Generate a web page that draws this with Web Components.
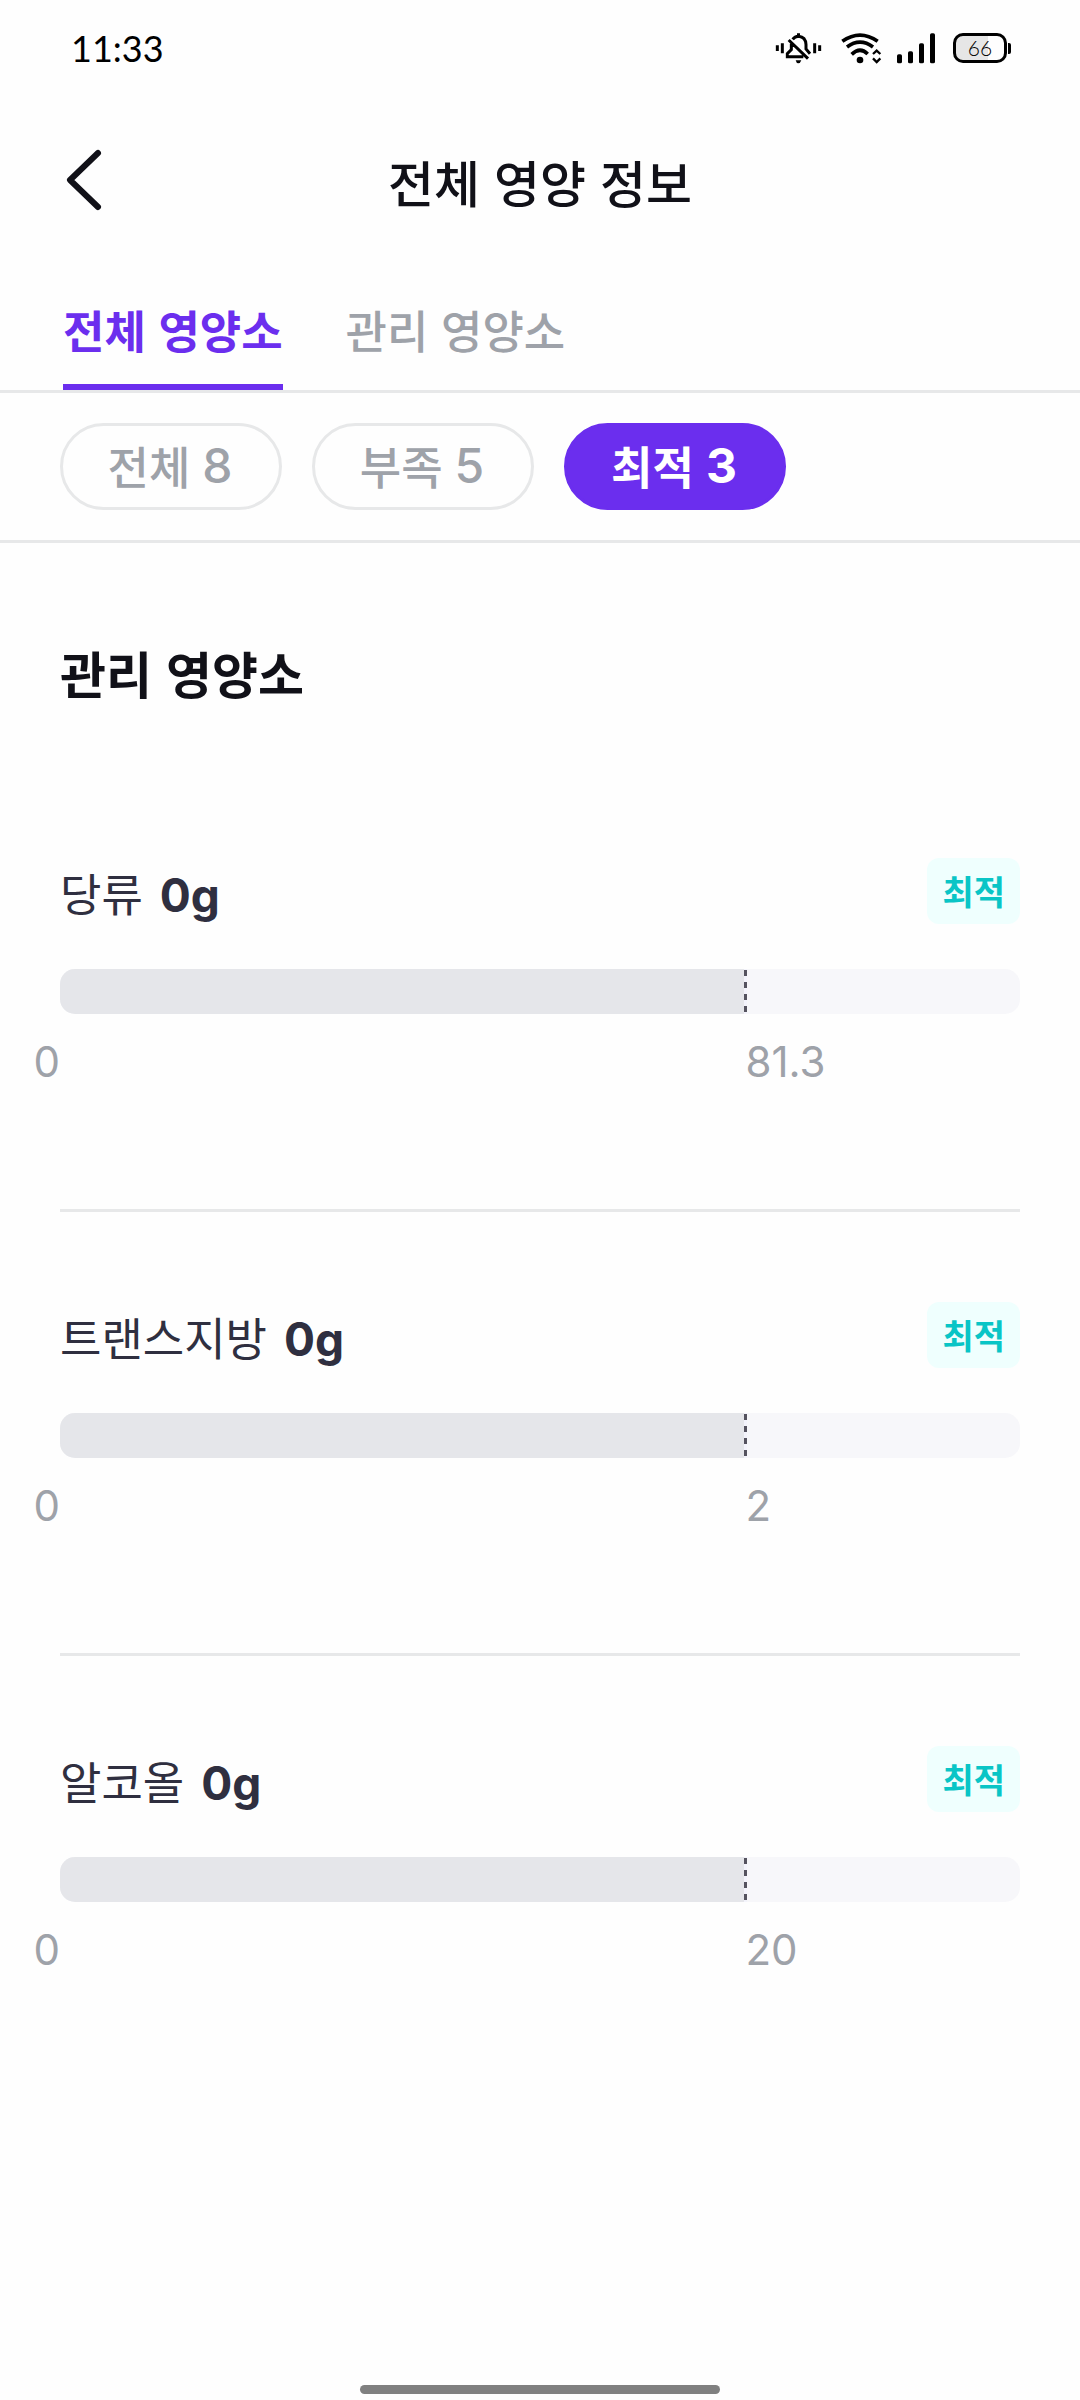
<!DOCTYPE html>
<html lang="ko">
<head>
<meta charset="utf-8">
<meta name="viewport" content="width=device-width, initial-scale=1">
<title>전체 영양 정보</title>
<style>
  html, body { margin: 0; background: #fefefe; }
  body {
    --latin: Inter, "Noto Sans CJK KR", sans-serif;
    --brand: #6b2eee;
    --line: #e7e8e9;
    --muted: #9ea2a9;
    --ink: #111118;
    --body: #2f2f40;
    font-family: "Noto Sans CJK KR", sans-serif;
    color: var(--ink);
  }
</style>
</head>
<body>
<nutrition-page></nutrition-page>

<template id="status-bar">
  <style>
    :host { display: flex; align-items: center; justify-content: space-between; height: 96px; padding: 0 69px 0 71px; color: #000; }
    time { font: 400 36px/48px Lato, sans-serif; }
    .icons { display: flex; align-items: center; gap: 12px; }
    svg { display: block; height: 32px; }
    .battery { display: flex; align-items: center; gap: 1px; padding-left: 4px; }
    .cell { box-sizing: border-box; width: 54px; height: 30px; border: 3px solid #000; border-radius: 10px; background: linear-gradient(90deg, #e6e6e6 66%, #fefefe 66%); font: 300 21px/24px Lato, sans-serif; text-align: center; }
    .nub { width: 3px; height: 11px; border-radius: 0 2px 2px 0; background: #000; }
  </style>
  <time>11:33</time>
  <div class="icons">
    <svg width="50" viewBox="105 65 150 96" fill="none" stroke="#000" stroke-width="9" aria-hidden="true">
      <path d="M112 105v17M127 99v30M224 99v30M239 105v17M146 89L204 145M158 87Q164 79 176 78Q197 80 198 103V116L210 130M154 100V118L142 130V139H190"/>
      <path d="M171 69h9v8h-9zM167 150h17q-3 9-9 9t-8-9z" fill="#000" stroke="none"/>
    </svg>
    <svg width="46" viewBox="291 65 138 96" fill="none" stroke="#000" aria-hidden="true">
      <path d="M307 93Q360 56 413 93M321 110Q360 81 399 110M335 132Q360 108 383 131" stroke-width="11"/>
      <circle cx="360" cy="149" r="10" fill="#000" stroke="none"/>
      <path d="M399 131L410 121L421 131M399 144L410 155L421 144" stroke-width="7"/>
    </svg>
    <svg width="42" viewBox="465 65 126 96" fill="#000" aria-hidden="true">
      <rect x="471" y="132" width="15" height="27" rx="5"/><rect x="504" y="123" width="15" height="36" rx="5"/><rect x="537" y="99" width="15" height="60" rx="5"/><rect x="570" y="69" width="15" height="90" rx="5"/>
    </svg>
    <div class="battery"><div class="cell">66</div><div class="nub"></div></div>
  </div>
</template>

<template id="page-header">
  <style>
    :host { display: grid; grid-template-columns: 1fr auto 1fr; align-items: center; height: 168px; padding: 0 60px; }
    button { justify-self: start; border: 0; padding: 0; background: none; color: inherit; }
    svg { display: block; }
    h1 { margin: 0; padding-top: 2px; font-size: 50px; font-weight: 500; line-height: 72px; }
  </style>
  <button aria-label="뒤로">
    <svg width="48" height="72" viewBox="0 0 48 72" fill="none" stroke="currentColor" stroke-width="6" stroke-linecap="round" stroke-linejoin="round"><path d="M38 9L10 36L38 63"/></svg>
  </button>
  <h1><slot></slot></h1>
</template>

<template id="nutrient-tab">
  <style>
    :host { display: block; }
    button { display: block; height: 126px; border: 0; border-bottom: 6px solid transparent; padding: 12px 0 0; background: none; color: var(--muted); font: 500 45px/60px "Noto Sans CJK KR", sans-serif; }
    :host([selected]) button { color: var(--brand); border-color: var(--brand); font-weight: 700; }
  </style>
  <button role="tab"><slot></slot></button>
</template>

<template id="filter-chip">
  <style>
    :host { display: block; }
    button { display: flex; align-items: center; justify-content: center; gap: 12px; box-sizing: border-box; min-width: 222px; height: 87px; border: 3px solid var(--line); border-radius: 44px; padding: 0 42px 2px 40px; background: none; color: var(--muted); font: 500 45px/60px "Noto Sans CJK KR", sans-serif; }
    b { font: 500 48px/60px var(--latin); }
    :host([selected]) button { border-color: var(--brand); background: var(--brand); color: #fff; font-weight: 700; }
    :host([selected]) b { font-weight: 700; }
  </style>
  <button><span><slot></slot></span><b></b></button>
</template>

<template id="nutrient-row">
  <style>
    :host { display: block; padding: 90px 0 117px; color: var(--body); }
    :host(:not(:first-of-type)) { border-top: 3px solid var(--line); }
    .head { display: flex; align-items: flex-start; justify-content: space-between; height: 66px; margin-bottom: 45px; }
    h3 { display: flex; align-items: baseline; gap: 17px; margin: 0; padding-top: 2px; font-size: 45px; font-weight: 400; line-height: 66px; }
    h3 b { font: 700 46px/66px var(--latin); }
    .badge { border-radius: 12px; padding: 0 15px; background: #effffe; color: #09c5c6; font-size: 34px; font-weight: 700; line-height: 66px; }
    .track { height: 45px; border-radius: 15px; background: #f7f7fa; overflow: hidden; display: flex; }
    .fill { width: 71.3%; background: #e5e6ea; }
    .limit { width: 3px; background: repeating-linear-gradient(#f3f3fb 0 1px, #55535f 1px 7px, #f3f3fb 7px 12px); }
    .scale { display: flex; margin-top: 18px; color: var(--muted); font: 400 42px/60px var(--latin); }
    .zero { display: flex; justify-content: flex-end; width: 0; }
    .max { margin-left: 71.4%; }
  </style>
  <div class="head"><h3><span><slot></slot></span><b></b></h3><span class="badge">최적</span></div>
  <div class="track"><div class="fill"></div><div class="limit"></div></div>
  <div class="scale"><span class="zero">0</span><span class="max"></span></div>
</template>

<template id="nutrition-page">
  <style>
    :host { display: flex; flex-direction: column; min-height: 100vh; }
    nav { display: flex; gap: 63px; height: 126px; padding: 0 63px; border-bottom: 3px solid var(--line); }
    .chips { display: flex; gap: 30px; padding: 30px 60px; border-bottom: 3px solid var(--line); }
    main { flex: 1; padding: 93px 60px 0; }
    h2 { margin: 0 0 60px; font-size: 50px; font-weight: 700; line-height: 72px; }
    .home { align-self: center; width: 33.3%; height: 9px; margin-bottom: 6px; border-radius: 5px; background: #808080; }
  </style>
  <status-bar></status-bar>
  <page-header>전체 영양 정보</page-header>
  <nav role="tablist"><nutrient-tab selected>전체 영양소</nutrient-tab><nutrient-tab>관리 영양소</nutrient-tab></nav>
  <div class="chips"><filter-chip count="8">전체</filter-chip><filter-chip count="5">부족</filter-chip><filter-chip count="3" selected>최적</filter-chip></div>
  <main>
    <h2>관리 영양소</h2>
    <section>
      <nutrient-row amount="0g" max="81.3">당류</nutrient-row>
      <nutrient-row amount="0g" max="2">트랜스지방</nutrient-row>
      <nutrient-row amount="0g" max="20">알코올</nutrient-row>
    </section>
  </main>
  <div class="home"></div>
</template>

<script>
  class TemplateElement extends HTMLElement {
    constructor() {
      super();
      this.attachShadow({ mode: "open" })
        .append(document.getElementById(this.localName).content.cloneNode(true));
    }
  }
  customElements.define("status-bar", class extends TemplateElement {});
  customElements.define("page-header", class extends TemplateElement {});
  customElements.define("nutrient-tab", class extends TemplateElement {
    connectedCallback() {
      this.shadowRoot.querySelector("button").setAttribute("aria-selected", this.hasAttribute("selected"));
    }
  });
  customElements.define("filter-chip", class extends TemplateElement {
    connectedCallback() {
      this.shadowRoot.querySelector("b").textContent = this.getAttribute("count");
      this.shadowRoot.querySelector("button").setAttribute("aria-pressed", this.hasAttribute("selected"));
    }
  });
  customElements.define("nutrient-row", class extends TemplateElement {
    connectedCallback() {
      this.shadowRoot.querySelector("b").textContent = this.getAttribute("amount");
      this.shadowRoot.querySelector(".max").textContent = this.getAttribute("max");
    }
  });
  customElements.define("nutrition-page", class extends TemplateElement {});
</script>
</body>
</html>
